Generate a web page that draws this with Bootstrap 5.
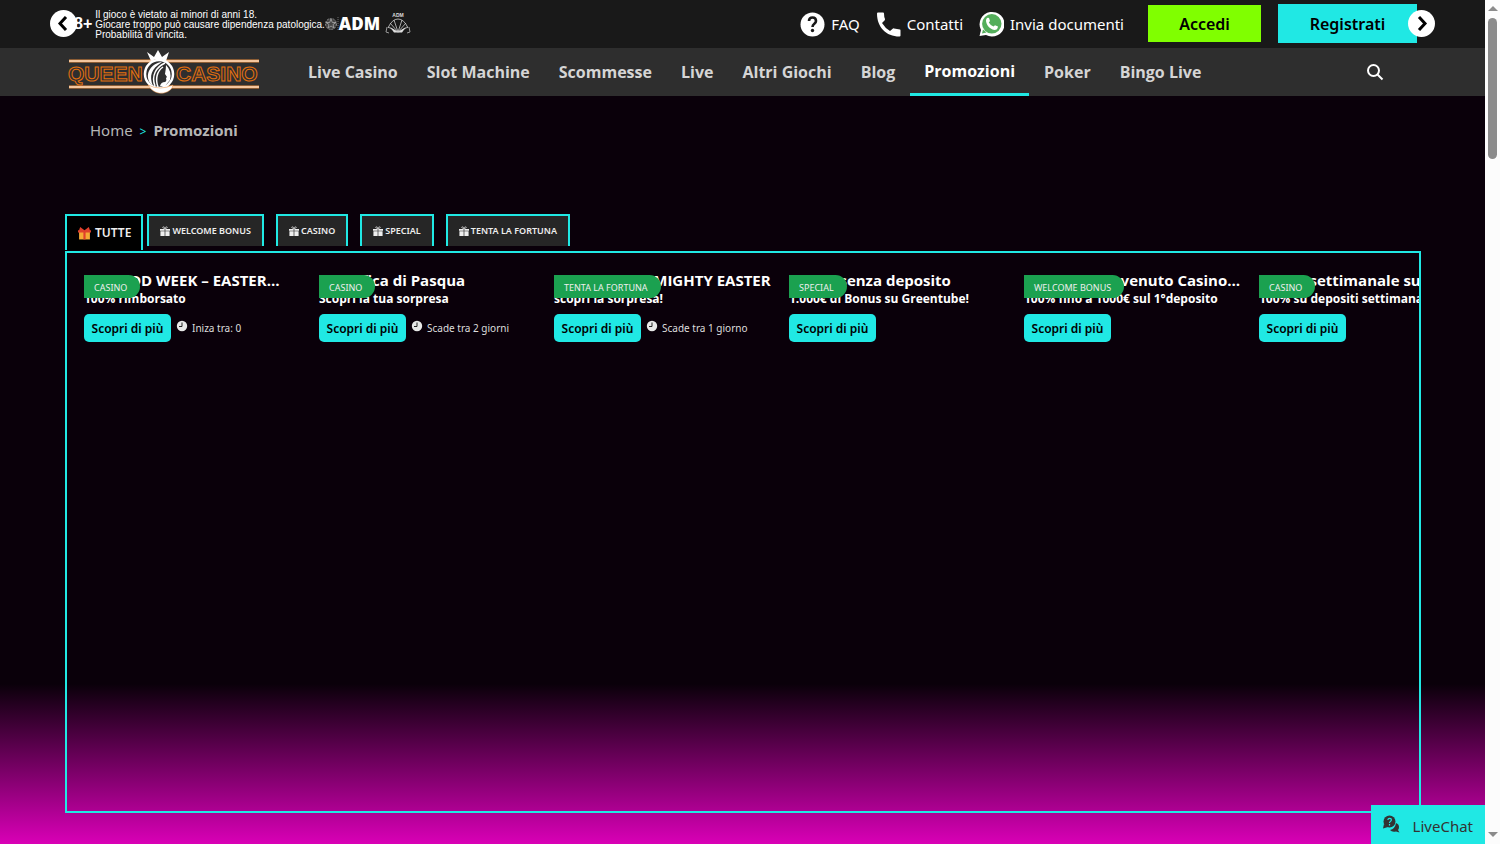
<!DOCTYPE html>
<html lang="it">
<head>
<meta charset="utf-8">
<meta name="viewport" content="width=device-width, initial-scale=1">
<title>Queen Casino – Promozioni</title>
<link href="https://cdn.jsdelivr.net/npm/bootstrap@5.3.0/dist/css/bootstrap.min.css" rel="stylesheet">
<style>
:root { --cyan: #20e8e4; --ink: #0a000a; }
body { font-family: "Noto Sans", sans-serif; background: #fcfcfc; color: #fff; }
.site { background: var(--ink) linear-gradient(to top, #d900b6, var(--ink) 160px) no-repeat; }
.scroll-rail { width: 15px; background: #fcfcfc; padding: 6px 0; }
.scroll-thumb { width: 9px; height: 141px; background: #8b8b8b; border-radius: 5px; margin-top: 7px; }
a { text-decoration: none; color: inherit; }
.topbar { background: #191919; height: 48px; padding: 0 68px 0 74px; }
.age { font: 700 16px "Liberation Sans", sans-serif; }
.legal { font: 10px/10px "Liberation Sans", sans-serif; margin-left: 3px; padding-top: 2px; }
.adm-name { font: 800 17px/20px "Open Sans", sans-serif; }
.arrow-btn { width: 27px; height: 27px; border: 0; border-radius: 50%; background: #fff; top: 10px; }
.arrow-left { left: 50px; }
.arrow-right { right: 50px; }
.help-link { font-size: 15px; line-height: 24px; gap: 6px; }
.cta { border-radius: 0; font-weight: 600; font-size: 16px; line-height: 24px; color: #000; border: 0; margin-bottom: 2px; padding-top: 3px; }
.cta-login { background: #80ff00; width: 113px; height: 37px; margin-left: 24px; }
.cta-join { background: var(--cyan); width: 139px; height: 39px; margin-left: 17px; }
.mainbar { background: #2e2e2e; height: 48px; padding: 0 101px 0 68px; }
.brand-logo { font: 700 21px "Liberation Sans", sans-serif; fill: #2e2e2e; stroke: #e2700f; stroke-width: 1px; }
.menu { margin-left: 34px; gap: 1px; }
.menu a { font: 700 16px/24px "Open Sans", sans-serif; color: #d5d5d5; padding: 12px 14px; }
.menu a.active { color: #fff; padding: 11px 14px 10px; border-bottom: 3px solid var(--cyan); }
.crumbs { font-size: 15px; line-height: 24px; color: #b5b5b5; padding: 22px 90px; }
.crumb-sep { color: var(--cyan); font-size: 12px; padding: 0 3px; }
.content-area { padding: 48px 64px 0 65px; }
.tab-btn { background: #262626; border: 2px solid var(--cyan); border-bottom: 0; color: #eee; font: 600 9px/16px "Noto Sans", sans-serif; height: 32px; padding: 0 11px; margin-right: 12px; gap: 2px; }
.tab-btn.active { background: #000; height: 36px; font-size: 12px; margin-right: 4px; padding: 0 10px 0 11px; gap: 4px; }
.promo-panel { border: 2px solid var(--cyan); height: 562px; margin-top: 1px; padding: 17px; }
.promo { width: 220px; flex: none; margin-right: 15px; }
.promo h2 { font: 700 15px/21px "Open Sans", sans-serif; margin: 0; }
.promo p { font: 700 12px/16px "Open Sans", sans-serif; margin: 0 0 7px; }
.tag { left: 0; top: 5px; height: 23px; padding: 0 13px 0 10px; background: #1ba150; border-radius: 0 12px 12px 0; font-size: 9px; line-height: 25px; color: #eee; }
.more { background: var(--cyan); color: #000; border: 0; border-radius: 5px; font-weight: 600; font-size: 12px; line-height: 20px; width: 87px; height: 28px; padding: 1px 0 0; }
.when { font-size: 10px; line-height: 16px; color: #ddd; margin-left: 5px; }
.chat { right: 0; bottom: 0; width: 114px; height: 39px; border: 0; background: var(--cyan); color: #333; font-size: 15px; padding: 3px 12px 0; }
.chat svg { margin-bottom: 4px; }
</style>
</head>
<body>
<svg class="d-none">
  <symbol id="gift" viewBox="0 0 12 12"><path d="M0 3.500h5.600v2.200H0zM6.400 3.500H12v2.200H6.400zM.5 6.300h5.100V12H.5zM6.400 6.300h5.100V12H6.400z"/><path d="M6 3C3 3 2.500 1 4 1s2 1.500 2 2C6 2.500 6.500 1 8 1s1 2-2 2z" fill="none" stroke="currentColor" stroke-width=".8"/></symbol>
  <symbol id="clock" viewBox="0 0 12 12"><circle cx="6" cy="6" r="5.200" fill="#e8e8e8"/><path d="M6 2.500V6.500H3" fill="none" stroke="#222"/></symbol>
</svg>
<div class="d-flex vh-100 overflow-hidden">
<div class="site flex-grow-1 position-relative overflow-hidden">
  <header>
    <div class="topbar d-flex align-items-center justify-content-between position-relative">
      <button class="arrow-btn arrow-left position-absolute p-0 d-flex" aria-label="Precedente"><svg class="m-auto" width="13" height="15"><path d="M9 1L3 7.500L9 14" fill="none" stroke="#000" stroke-width="3"/></svg></button>
      <div class="d-flex align-items-center">
        <span class="age">8+</span>
        <div class="legal">Il gioco è vietato ai minori di anni 18.<br>Giocare troppo può causare dipendenza patologica.<br>Probabilità di vincita.</div>
        <svg width="14" height="16"><circle cx="6" cy="8" r="5.500" fill="#444" stroke="#888" stroke-dasharray="2 1"/><path d="M6 3l1.300 3.500H11L8 8.500l1 3.500-3-2-3 2 1-3.500-3-2h3.700z" fill="none" stroke="#aaa" stroke-width=".8"/><path d="M13 1v14" stroke="#444" stroke-width="2" stroke-dasharray="1 1"/></svg>
        <span class="adm-name">ADM</span>
        <svg class="ms-1" width="28" height="24" viewBox="0 0 28 24"><text x="14" y="5" font-size="5" font-weight="700" font-family="Liberation Sans, sans-serif" text-anchor="middle" fill="#ddd">ADM</text><path d="M4 16Q8 7 14 7Q20 7 24 16M14 20L4 15M14 20L10 8M14 20L18 8M14 20L24 15M6 11L14 20L22 11" fill="none" stroke="#ccc" stroke-width=".8"/><path d="M6 15l8 5 8-5-4 5.500h-8z" fill="#ddd"/><path d="M3 15l-1 5 3 1M25 15l1 5-3 1" fill="none" stroke="#999"/></svg>
      </div>
      <div class="d-flex align-items-center">
        <a href="#" class="help-link d-flex align-items-center"><svg width="25" height="25"><circle cx="12.500" cy="12.500" r="12" fill="#fff"/><path d="M9 9Q9 5.500 12.500 5.500T16 9C16 12 12.500 11.500 12.500 15" fill="none" stroke="#191919" stroke-width="2.600"/><circle cx="12.500" cy="18.500" r="1.700" fill="#191919"/></svg>FAQ</a>
        <a href="#" class="help-link d-flex align-items-center ms-3"><svg width="25" height="25"><path d="M1 1.500Q1 .5 2 .5H7Q8 .5 8 1.500Q8 5 9 7Q9 8 8.500 8.500L6 11Q9 16 14 19L17 16.500Q17.500 16 18 16.500Q21 17 24 17.500Q24.500 17.500 24.500 18.500V23.500Q24.500 24.500 23.500 24.500C10 24.500 1 15 1 1.500z" fill="#fff"/></svg>Contatti</a>
        <a href="#" class="help-link d-flex align-items-center ms-3"><svg width="25" height="26"><path d="M.5 25L2 19A12.500 12.300 0 1 1 7 24z" fill="#fff"/><circle cx="12.800" cy="12.800" r="9.700" fill="#54ae5b"/><path d="M3 22.500l1-4 3.500 3z" fill="#54ae5b"/><path d="M8 7Q9 6.500 10 7L11 10 9.800 11.500Q11.500 14.500 14.500 15.500L16 14.200 19 15.500Q18.500 19 15.500 19C10 18 7 13 7 9.500Q7 8 8 7z" fill="#fff"/></svg>Invia documenti</a>
        <button class="cta cta-login">Accedi</button>
        <button class="cta cta-join">Registrati</button>
      </div>
      <button class="arrow-btn arrow-right position-absolute p-0 d-flex" aria-label="Successivo"><svg class="m-auto" width="13" height="15"><path d="M4 1L10 7.500L4 14" fill="none" stroke="#000" stroke-width="3"/></svg></button>
    </div>
    <div class="mainbar d-flex align-items-center">
      <a href="#" aria-label="Queen Casino"><svg class="brand-logo d-block" width="192" height="46" viewBox="0 0 192 46"><path d="M1 12h190M1 38h190" stroke="#e88c3c" stroke-width="3"/><path d="M1 12h190M1 38h190" stroke="#fff"/><text x="0" y="32">QUEEN</text><text x="108" y="32">CASINO</text><path d="M83 12L79 3 86 8 90 1 94 8 101 3 98 12Q90 8 83 12z" fill="#fff" stroke="none"/><circle cx="91" cy="25" r="14" fill="#2e2e2e" stroke="#fff" stroke-width="2.500"/><path d="M82 34C76 24 84 14 94 13C83 20 81 27 85 37z" fill="#fff" stroke="none"/><path d="M87 37C83 27 88 18 97 14M90 38C87 30 89 22 95 18" fill="none" stroke="#fff" stroke-width="1.500"/><path d="M98 16Q104 22 102 31L97 37H92Q93 33 97 33Q99 32 98 29L99 28 97 25Q98 20 98 16z" fill="#fff" stroke="none"/><path d="M80 36Q86 46 96 44Q104 42 105 36Q92 42 80 36z" fill="#fff" stroke="#e88c3c" stroke-width=".5"/></svg></a>
      <nav class="menu d-flex flex-grow-1">
        <a href="#">Live Casino</a><a href="#">Slot Machine</a><a href="#">Scommesse</a><a href="#">Live</a><a href="#">Altri Giochi</a><a href="#">Blog</a><a href="#" class="active">Promozioni</a><a href="#">Poker</a><a href="#">Bingo Live</a>
      </nav>
      <button class="btn p-0 border-0 d-flex" aria-label="Cerca"><svg width="18" height="18"><circle cx="7.500" cy="7.500" r="5.500" fill="none" stroke="#fff" stroke-width="2"/><path d="M11.500 11.500l5 5" stroke="#fff" stroke-width="2"/></svg></button>
    </div>
  </header>
  <nav class="crumbs" aria-label="breadcrumb"><a href="#">Home</a> <span class="crumb-sep">&gt;</span> <b>Promozioni</b></nav>
  <main class="content-area">
    <div class="d-flex align-items-start">
      <button class="tab-btn active d-flex align-items-center"><svg width="13" height="13" viewBox="0 0 12 12"><path d="M1 4h10v7.500H1z" fill="#f6a936"/><path d="M5 3h2v8.500H5zM0 3h12v2H0zM2 0l4 3 4-3 1 3H1z" fill="#e0402c"/></svg>TUTTE</button>
      <button class="tab-btn d-flex align-items-center"><svg width="10" height="10" fill="currentColor"><use href="#gift"/></svg>WELCOME BONUS</button>
      <button class="tab-btn d-flex align-items-center"><svg width="10" height="10" fill="currentColor"><use href="#gift"/></svg>CASINO</button>
      <button class="tab-btn d-flex align-items-center"><svg width="10" height="10" fill="currentColor"><use href="#gift"/></svg>SPECIAL</button>
      <button class="tab-btn d-flex align-items-center"><svg width="10" height="10" fill="currentColor"><use href="#gift"/></svg>TENTA LA FORTUNA</button>
    </div>
    <section class="promo-panel d-flex overflow-hidden">
      <article class="promo position-relative"><h2 class="text-nowrap">BE GOOD WEEK – EASTER…</h2><p class="text-nowrap">100% rimborsato</p><span class="tag position-absolute">CASINO</span><div class="d-flex align-items-center"><button class="more">Scopri di più</button><span class="when d-flex gap-1"><svg width="12" height="12"><use href="#clock"/></svg>Iniza tra: 0</span></div></article>
      <article class="promo position-relative"><h2 class="text-nowrap">Classifica di Pasqua</h2><p class="text-nowrap">Scopri la tua sorpresa</p><span class="tag position-absolute">CASINO</span><div class="d-flex align-items-center"><button class="more">Scopri di più</button><span class="when d-flex gap-1"><svg width="12" height="12"><use href="#clock"/></svg>Scade tra 2 giorni</span></div></article>
      <article class="promo position-relative"><h2 class="text-nowrap">LA FORTUNA MIGHTY EASTER</h2><p class="text-nowrap">scopri la sorpresa!</p><span class="tag position-absolute">TENTA LA FORTUNA</span><div class="d-flex align-items-center"><button class="more">Scopri di più</button><span class="when d-flex gap-1"><svg width="12" height="12"><use href="#clock"/></svg>Scade tra 1 giorno</span></div></article>
      <article class="promo position-relative"><h2 class="text-nowrap">Bonus senza deposito</h2><p class="text-nowrap">1.000€ di Bonus su Greentube!</p><span class="tag position-absolute">SPECIAL</span><button class="more d-block">Scopri di più</button></article>
      <article class="promo position-relative"><h2 class="text-nowrap">Bonus di benvenuto Casino…</h2><p class="text-nowrap">100% fino a 1000€ sul 1°deposito</p><span class="tag position-absolute">WELCOME BONUS</span><button class="more d-block">Scopri di più</button></article>
      <article class="promo position-relative"><h2 class="text-nowrap">Bonus settimanale sui depositi</h2><p class="text-nowrap">100% su depositi settimanali</p><span class="tag position-absolute">CASINO</span><button class="more d-block">Scopri di più</button></article>
    </section>
  </main>
  <button class="chat position-absolute d-flex align-items-center justify-content-between"><svg width="17" height="18" viewBox="0 0 17 18"><path d="M7 15Q12 14 13 8Q16 9 16 12Q16 14 15 15L16.500 17.500 13 16.500Q9 17.500 7 15z" fill="#333"/><circle cx="6.500" cy="6.500" r="6" fill="#333"/><path d="M1 9L0 13.500 5 12z" fill="#333"/><path d="M4.800 5Q5 3.300 6.700 3.300T8.300 5C8.300 6.500 6.500 6.300 6.500 8M6.500 9v1.400" fill="none" stroke="#20e8e4" stroke-width="1.200"/></svg>LiveChat</button>
</div>
<div class="scroll-rail d-flex flex-column align-items-center flex-shrink-0">
  <svg width="10" height="5"><path d="M0 5L5 0L10 5z" fill="#8b8b8b"/></svg>
  <div class="scroll-thumb"></div>
  <svg class="mt-auto" width="10" height="6"><path d="M0 0L5 5L10 0z" fill="#8b8b8b"/></svg>
</div>
</div>
<script src="https://cdn.jsdelivr.net/npm/bootstrap@5.3.0/dist/js/bootstrap.bundle.min.js"></script>
</body>
</html>
